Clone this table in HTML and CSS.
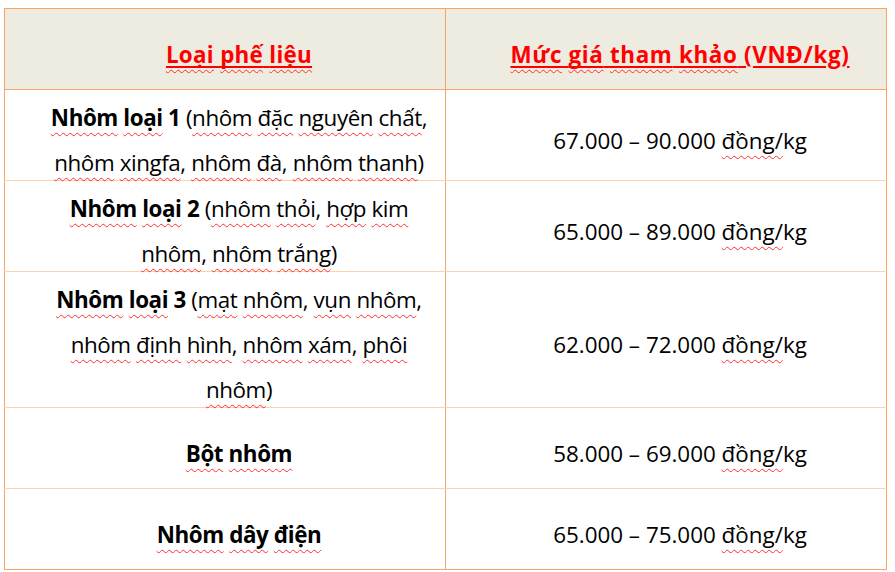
FILE: index.html
```html
<!DOCTYPE html>
<html lang="vi">
<head>
<meta charset="utf-8">
<title>Bảng giá nhôm phế liệu</title>
<link rel="stylesheet" href="styles.css">
</head>
<body>
<table class="price-table">
  <thead>
    <tr class="row-head">
      <th class="h-type"><span class="t"><span class="ul"><span class="sp">Loại</span> <span class="sp">phế</span> <span class="sp">liệu</span></span></span></th>
      <th class="h-price"><span class="t"><span class="ul"><span class="sp">Mức</span> <span class="sp">giá</span> <span class="sp">tham</span> <span class="sp">khảo</span> (VNĐ/kg)</span></span></th>
    </tr>
  </thead>
  <tbody>
    <tr class="row-2">
      <td class="c-type"><span class="t"><b><span class="sp">Nhôm</span> <span class="sp">loại</span> 1</b> (<span class="sp">nhôm</span> <span class="sp">đặc</span> <span class="sp">nguyên</span> <span class="sp">chất</span>,<br><span class="sp">nhôm</span> <span class="sp">xingfa</span>, <span class="sp">nhôm</span> <span class="sp">đà</span>, <span class="sp">nhôm</span> <span class="sp">thanh</span>)</span></td>
      <td><span class="t">67.000 – 90.000 <span class="sp">đồng/</span>kg</span></td>
    </tr>
    <tr class="row-2">
      <td class="c-type"><span class="t"><b><span class="sp">Nhôm</span> <span class="sp">loại</span> 2</b> (<span class="sp">nhôm</span> <span class="sp">thỏi</span>, <span class="sp">hợp</span> <span class="sp">kim</span><br><span class="sp">nhôm</span>, <span class="sp">nhôm</span> <span class="sp">trắng</span>)</span></td>
      <td><span class="t">65.000 – 89.000 <span class="sp">đồng/</span>kg</span></td>
    </tr>
    <tr class="row-3">
      <td class="c-type"><span class="t"><b><span class="sp">Nhôm</span> <span class="sp">loại</span> 3</b> (<span class="sp">mạt</span> <span class="sp">nhôm</span>, <span class="sp">vụn</span> <span class="sp">nhôm</span>,<br><span class="sp">nhôm</span> <span class="sp">định</span> <span class="sp">hình</span>, <span class="sp">nhôm</span> <span class="sp">xám</span>, <span class="sp">phôi</span><br><span class="sp">nhôm</span>)</span></td>
      <td><span class="t">62.000 – 72.000 <span class="sp">đồng/</span>kg</span></td>
    </tr>
    <tr class="row-1">
      <td class="c-type"><span class="t"><b><span class="sp">Bột</span> <span class="sp">nhôm</span></b></span></td>
      <td><span class="t">58.000 – 69.000 <span class="sp">đồng/</span>kg</span></td>
    </tr>
    <tr class="row-1 row-last">
      <td class="c-type"><span class="t"><b><span class="sp">Nhôm</span> <span class="sp">dây</span> <span class="sp">điện</span></b></span></td>
      <td><span class="t">65.000 – 75.000 <span class="sp">đồng/</span>kg</span></td>
    </tr>
  </tbody>
</table>
</body>
</html>
```
FILE: styles.css
```css
html, body {
  margin: 0;
  padding: 0;
  background: #ffffff;
}

body {
  font-family: "Open Sans", "Liberation Sans", sans-serif;
  font-size: 22.4px;
  color: #000000;
}

.price-table {
  margin: 8px 0 0 4px;
  width: 883px;
  border-collapse: collapse;
  table-layout: fixed;
}

.price-table th,
.price-table td {
  width: 50%;
  padding: 0 8px 0 36px;
  text-align: center;
  vertical-align: middle;
  line-height: 45px;
  white-space: nowrap;
  border-left: 1px solid #f8a462;
  border-right: 1px solid #f8a462;
  border-top: 1px solid #fbd2ae;
  border-bottom: 1px solid #fbd2ae;
}

.price-table th {
  background: #eeebe0;
  color: #ff0000;
  font-weight: 700;
  border-top: 1px solid #f8a462;
  border-bottom: 1px solid #f8a462;
}

.h-type { letter-spacing: 0.3px; }
.h-price { letter-spacing: 0.65px; }
.c-type { letter-spacing: -0.42px; }

.row-head { height: 81px; }
.row-2 { height: 91px; }
.row-3 { height: 136px; }
.row-1 { height: 81px; }

.row-last td { border-bottom: 1px solid #f8a462; }

.t {
  line-height: 30px;
  vertical-align: -5px;
}

b { font-weight: 700; }

.ul {
  text-decoration: underline solid #ff0000;
  text-decoration-thickness: 1.5px;
  text-underline-offset: 3px;
}

.sp {
  text-decoration: underline wavy #ff3030;
  text-decoration-thickness: 0.8px;
  text-underline-offset: 6px;
  text-decoration-skip-ink: none;
}
```
